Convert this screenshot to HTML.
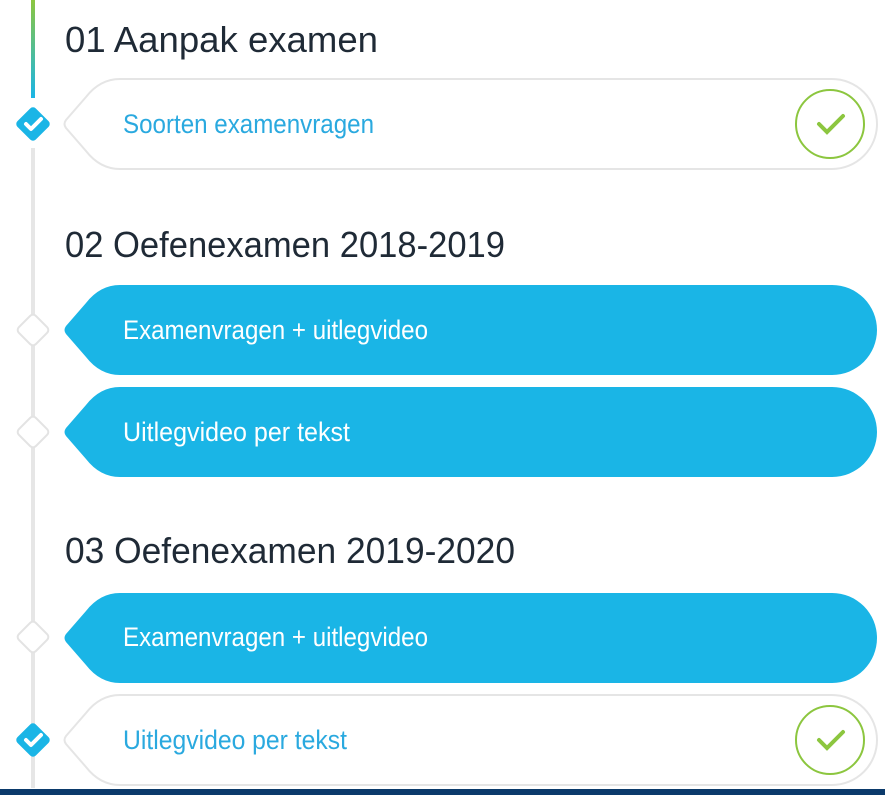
<!DOCTYPE html><html><head><meta charset="utf-8"><style>body{margin:0;background:#fff}svg{display:block}text{font-family:"Liberation Sans",sans-serif}</style></head><body>
<svg width="885" height="795" viewBox="0 0 885 795" xmlns="http://www.w3.org/2000/svg">
<defs><linearGradient id="g" x1="0" y1="0" x2="0" y2="1"><stop offset="0" stop-color="#8cc63f"/><stop offset="1" stop-color="#1ab5e6"/></linearGradient>
<path id="c" d="M120 0 L832 0 A45 45 0 0 1 832 90 L120 90 Q100 90 86 72 L66 49 Q63 45 66 41 L86 18 Q100 0 120 0 Z"/></defs>
<rect x="31" y="0" width="4" height="98" fill="url(#g)"/>
<rect x="31" y="148" width="4" height="640" fill="#e6e6e6"/>
<use href="#c" y="79" fill="#fff" stroke="#e5e5e5" stroke-width="2"/>
<use href="#c" y="285" fill="#1ab5e6"/>
<use href="#c" y="387" fill="#1ab5e6"/>
<use href="#c" y="593" fill="#1ab5e6"/>
<use href="#c" y="695" fill="#fff" stroke="#e5e5e5" stroke-width="2"/>
<g fill="#fff" stroke="#e3e3e3" stroke-width="2">
<rect x="21" y="318" width="24" height="24" rx="4" transform="rotate(45 33 330)"/>
<rect x="21" y="420" width="24" height="24" rx="4" transform="rotate(45 33 432)"/>
<rect x="21" y="625" width="24" height="24" rx="4" transform="rotate(45 33 637)"/>
</g>
<rect x="20" y="111" width="26" height="26" rx="4" fill="#1ab5e6" transform="rotate(45 33 124)"/>
<path d="M26 124 L31 129 L41 119" fill="none" stroke="#fff" stroke-width="4" stroke-linecap="round" stroke-linejoin="round"/>
<rect x="20" y="727" width="26" height="26" rx="4" fill="#1ab5e6" transform="rotate(45 33 740)"/>
<path d="M26 740 L31 745 L41 735" fill="none" stroke="#fff" stroke-width="4" stroke-linecap="round" stroke-linejoin="round"/>
<g fill="none" stroke="#8cc63f" stroke-width="2"><circle cx="830" cy="124" r="34"/><circle cx="830" cy="740" r="34"/></g>
<g fill="none" stroke="#8cc63f" stroke-width="4" stroke-linecap="round"><path d="M819 124 L827 132 L843 116"/><path d="M819 740 L827 748 L843 732"/></g>
<g fill="#1f2a36" font-size="36"><text x="65" y="52" textLength="313" lengthAdjust="spacingAndGlyphs">01  Aanpak examen</text>
<text x="65" y="257" textLength="440" lengthAdjust="spacingAndGlyphs">02  Oefenexamen 2018-2019</text>
<text x="65" y="563" textLength="450" lengthAdjust="spacingAndGlyphs">03  Oefenexamen 2019-2020</text></g>
<g font-size="27"><text x="123" y="133" fill="#2aa9df" textLength="251" lengthAdjust="spacingAndGlyphs">Soorten examenvragen</text>
<text x="123" y="339" fill="#fff" textLength="305" lengthAdjust="spacingAndGlyphs">Examenvragen + uitlegvideo</text>
<text x="123" y="441" fill="#fff" textLength="227" lengthAdjust="spacingAndGlyphs">Uitlegvideo per tekst</text>
<text x="123" y="646" fill="#fff" textLength="305" lengthAdjust="spacingAndGlyphs">Examenvragen + uitlegvideo</text>
<text x="123" y="749" fill="#2aa9df" textLength="224" lengthAdjust="spacingAndGlyphs">Uitlegvideo per tekst</text></g>
<rect x="0" y="789" width="885" height="6" fill="#0b3a6b"/>
</svg></body></html>
